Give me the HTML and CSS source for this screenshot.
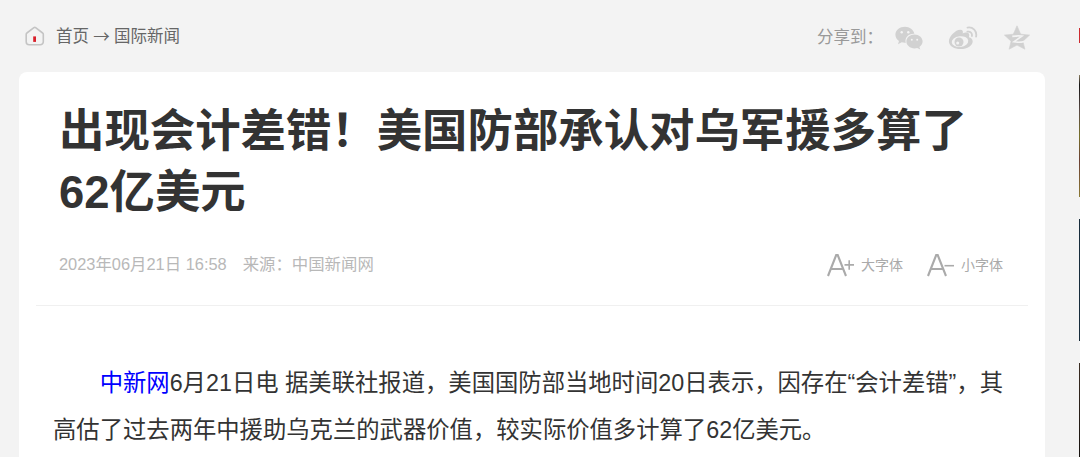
FILE: index.html
```html
<!DOCTYPE html>
<html lang="zh-CN">
<head>
  <meta charset="UTF-8">
  <meta name="viewport" content="width=device-width, initial-scale=1.0">
  <title>出现会计差错！美国防部承认对乌军援多算了62亿美元</title>
  <link rel="stylesheet" href="styles.css">
</head>
<body>
  <div class="page">
    <main class="main">
      <div class="topbar">
        <div class="crumbs">
          <svg class="home" viewBox="0 0 20 20">
            <path d="M1.2 8.2v7.6a3 3 0 0 0 3 3h11.100a3 3 0 0 0 3-3V8.200a1.600 1.600 0 0 0-.7-1.200l-7-5.300a1.400 1.400 0 0 0-1.700 0L1.900 7a1.600 1.600 0 0 0-.7 1.200z" fill="none" stroke="#c4c4c4" stroke-width="1.6"/>
            <path d="M8.200 10.400h2.800v5.500H8.200z" fill="#d9202b"/>
          </svg>
          <a href="#">首页</a><span class="arrow">→</span><a href="#">国际新闻</a>
        </div>
        <div class="share">
          <span>分享到：</span>
          <!-- wechat -->
          <svg class="wechat" viewBox="0 0 28 24">
            <path d="M10 .7C4.700.7.4 4.200.4 8.700c0 2.600 1.300 4.700 3.600 6.200L3 18.200l3.700-1.900c1.100.3 2.100.4 3.300.4h.8c-1.500-5 2.800-9.300 8.600-8.900C18.500 3.700 14.700.7 10 .7z"/>
            <path d="M27.600 15.500c0-3.800-3.700-6.900-8.100-6.900s-8.100 3.100-8.100 6.900 3.600 6.900 8.100 6.900c.9 0 1.800-.1 2.700-.4l3.100 1.600-.9-2.700c1.900-1.300 3.200-3.200 3.200-5.400z"/>
            <g class="hole"><circle cx="6.700" cy="6.300" r="1.200"/><circle cx="13.300" cy="6.300" r="1.200"/><circle cx="16.800" cy="13.700" r="1"/><circle cx="22.200" cy="13.700" r="1"/></g>
          </svg>
          <!-- weibo -->
          <svg class="weibo" viewBox="0 0 30 24">
            <path d="M20.900 11.200c.8-2.200.5-4.500-2.400-4.600-1.300 0-2.700.5-3.800.9.600-2.200.1-3.800-2.500-3.800C7.500 3.700.9 10.400.9 15.300c0 5 5.700 7.800 11.500 7.800 7.300 0 12.300-4.100 12.300-7.700 0-2.200-1.500-3.600-3.800-4.200z"/>
            <ellipse class="hole" cx="12" cy="15.600" rx="8.300" ry="5.400" transform="rotate(-7 12 15.600)"/>
            <circle cx="11" cy="16" r="4.500"/>
            <circle class="hole" cx="9.700" cy="17" r="1.500"/>
            <path class="wave" d="M19.500 1.600c5.400-.9 9.700 3.400 8.600 9.100M19.400 5.700c3-.6 5 1.500 4.500 4.300"/>
          </svg>
          <!-- qzone -->
          <svg class="qzone" viewBox="0 0 26 25">
            <path d="M13 .8l3.700 8.400 8.900.9-6.700 6.100 2 8-7.900-4.100-7.900 4.100 2-8L.4 10.100l8.900-.9z" stroke="#d1d1d1" stroke-linejoin="round" stroke-width=".6"/>
            <path class="cut" d="M8.300 11.400c3.400-.6 6.600-.7 9.700-.3l-8.200 5.700c3.200.7 6.900.7 10.500-.3"/>
          </svg>
        </div>
      </div>

      <article class="card">
        <h1>出现会计差错！美国防部承认对乌军援多算了62亿美元</h1>
        <div class="info">
          <div class="source"><span>2023年06月21日 16:58</span><span>来源：<a href="#">中国新闻网</a></span></div>
          <div class="fontsize">
            <a href="#">
              <svg viewBox="0 0 28 23"><path d="M1 22L9.200 1h1.500L19 22M4 15h12" stroke-width="2.100"/><path d="M17.500 10.900H27M22.200 6.200v9.500" stroke-width="1.600"/></svg>
              大字体
            </a>
            <a href="#">
              <svg viewBox="0 0 28 23"><path d="M1 22L9.200 1h1.500L19 22M4 15h12" stroke-width="2.100"/><path d="M17.500 11.700H27" stroke-width="1.600"/></svg>
              小字体
            </a>
          </div>
        </div>
        <div class="content">
          <p><a href="#">中新网</a>6月21日电 据美联社报道，美国国防部当地时间20日表示，因存在“会计差错”，其高估了过去两年中援助乌克兰的武器价值，较实际价值多计算了62亿美元。</p>
        </div>
      </article>
    </main>

    <aside class="side">
      <div class="side-title"></div>
      <div class="pic pic-a"></div>
      <div class="pic pic-b"></div>
      <div class="pic pic-c"></div>
    </aside>
  </div>
</body>
</html>
```
FILE: styles.css
```css
* {
  box-sizing: border-box;
}
body {
  margin: 0;
  background: #f3f3f3;
  color: #333;
  font-family: "Liberation Sans", "Noto Sans CJK SC", sans-serif;
}
a {
  color: inherit;
  text-decoration: none;
}
svg {
  display: block;
  flex: none;
}
.page {
  display: flex;
  justify-content: space-between;
  height: 457px;
  padding-left: 19px;
}
.main {
  display: flex;
  flex-direction: column;
  width: 1026px;
}

/* top bar */
.topbar {
  display: flex;
  justify-content: space-between;
  flex: none;
  height: 72px;
  padding: 0 15px 0 6px;
  font-size: 16.5px;
  line-height: 24px;
}
.crumbs {
  display: flex;
  align-items: center;
  height: 72px;
  color: #666;
}
.home {
  width: 20px;
  height: 20px;
  margin-right: 11px;
}
.arrow {
  width: 25px;
  font-family: "Noto Sans CJK SC", sans-serif;
  text-align: center;
}
.share {
  display: flex;
  align-items: center;
  height: 75px;
  color: #999;
}
.share span {
  width: 78px;
  margin-top: -2px;
}
.share svg {
  fill: #d1d1d1;
}
.share .hole {
  fill: #f3f3f3;
}
.wechat {
  width: 28px;
  height: 24px;
  margin-right: 25px;
}
.weibo {
  width: 30px;
  height: 24px;
  margin-right: 26px;
}
.weibo .wave {
  fill: none;
  stroke: #d1d1d1;
  stroke-width: 1.8;
  stroke-linecap: round;
}
.qzone {
  width: 26px;
  height: 25px;
}
.qzone .cut {
  fill: none;
  stroke: #f3f3f3;
  stroke-width: 1.6;
}

/* article */
.card {
  flex: 1;
  padding: 0 17px;
  background: #fff;
  border-radius: 8px 8px 0 0;
}
h1 {
  margin: 0;
  padding: 29px 50px 0 23px;
  font-size: 45.4px;
  line-height: 61px;
}
.info {
  display: flex;
  justify-content: space-between;
  height: 83px;
  padding: 29px 25px 0 23px;
  border-bottom: 1px solid #f0f0f0;
  color: #b8b8b8;
}
.source {
  display: flex;
  gap: 16px;
  font-size: 16.4px;
  line-height: 24px;
}
.fontsize {
  display: flex;
  gap: 24px;
  height: 26px;
  font-size: 14px;
  line-height: 20px;
  color: #aaa;
}
.fontsize a {
  display: flex;
  align-items: center;
  gap: 6px;
}
.fontsize svg {
  width: 28px;
  height: 23px;
  margin-top: 1px;
  fill: none;
  stroke: #aaa;
}
.content {
  padding: 54px 22px 0 17px;
  font-size: 23.33px;
  line-height: 46.5px;
}
.content p {
  margin: 0;
  text-indent: 2em;
}
.content a {
  color: #00f;
}

/* right column */
.side {
  display: flex;
  flex-direction: column;
  width: 1px;
  padding-top: 28px;
}
.side-title {
  height: 15px;
  margin-bottom: 32px;
  background: #cc2b30;
}
.pic {
  height: 122px;
  margin-bottom: 22px;
}
.pic-a {
  background: linear-gradient(#8a7c60, #151515 8%, #5a4a45 30%, #77702a 50%, #6b3f35 70%, #8b7a35);
}
.pic-b {
  background: #172c3b;
}
.pic-c {
  flex: 1;
  margin-bottom: 0;
  background: linear-gradient(#3a2c22, #17120f);
}
```
